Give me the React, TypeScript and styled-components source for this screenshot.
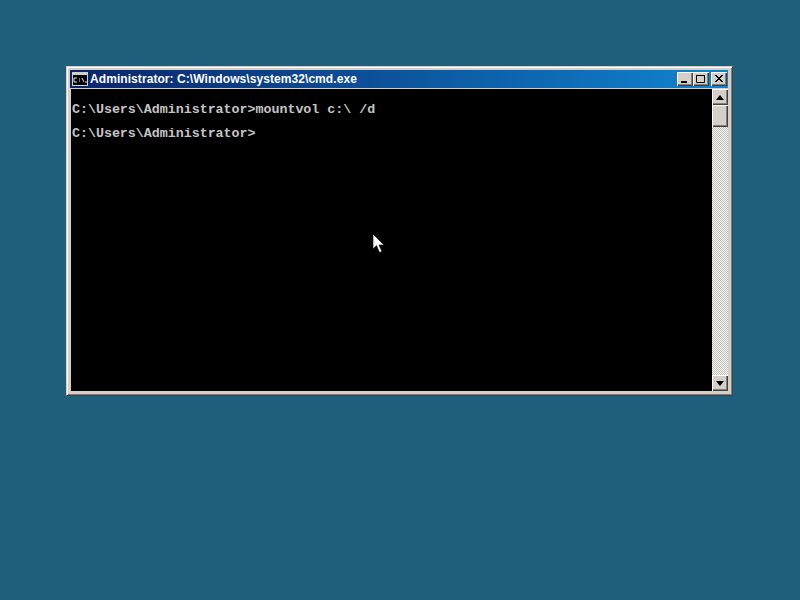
import React from "react";
import styled, { createGlobalStyle } from "styled-components";

const Global = createGlobalStyle`
  html, body { margin: 0; padding: 0; background: #1f5f7c; }
`;

const Desktop = styled.div`
  position: relative;
  width: 800px;
  height: 600px;
  background: #1f5f7c;
  padding: 66px 0 0 66px;
  box-sizing: border-box;
  overflow: hidden;
`;

const Window = styled.div`
  width: 667px;
  height: 330px;
  box-sizing: border-box;
  display: flex;
  flex-direction: column;
  background: #d4d0c8;
  border: 1px solid;
  border-color: #d4d0c8 #404040 #404040 #d4d0c8;
  box-shadow: inset 1px 1px 0 #fff, inset -1px -1px 0 #808080;
  padding: 3px 4px 4px 3px;
`;

const TitleBar = styled.div`
  height: 18px;
  flex: none;
  display: flex;
  align-items: center;
  gap: 2px;
  padding: 0 1px 0 2px;
  margin-bottom: 1px;
  background: linear-gradient(90deg, #0a246a 0%, #1084d0 100%);
`;

const TitleText = styled.span`
  flex: 1;
  color: #fff;
  font: bold 12px "Liberation Sans", sans-serif;
  letter-spacing: 0.07px;
  white-space: nowrap;
`;

const CaptionGroup = styled.div`
  display: flex;
`;

const CaptionButton = styled.div<{ $gap?: number }>`
  width: 16px;
  height: 14px;
  margin-left: ${(p) => p.$gap ?? 0}px;
  background: #d4d0c8;
  box-sizing: border-box;
  box-shadow: inset 1px 1px 0 #fff, inset -1px -1px 0 #404040, inset -2px -2px 0 #808080;
  display: flex;
  align-items: center;
  justify-content: center;
`;

const Body = styled.div`
  flex: 1;
  min-height: 0;
  display: flex;
  margin-left: 1px;
`;

const Console = styled.pre`
  flex: 1;
  margin: 0;
  padding: 15px 0 0 1px;
  background: #000;
  color: #c4c4c4;
  font: bold 13.33px/12px "Liberation Mono", monospace;
  letter-spacing: -0.02px;
  overflow: hidden;
`;

const ScrollBar = styled.div`
  width: 16px;
  flex: none;
  display: flex;
  flex-direction: column;
  background-image: repeating-conic-gradient(#bdbab3 0 25%, #fff 0 50%);
  background-size: 2px 2px;
`;

const ScrollButton = styled.div`
  width: 16px;
  height: 16px;
  flex: none;
  background: #d4d0c8;
  box-sizing: border-box;
  box-shadow: inset 1px 1px 0 #fff, inset -1px -1px 0 #404040, inset -2px -2px 0 #808080;
  display: flex;
  align-items: center;
  justify-content: center;
`;

const Thumb = styled(ScrollButton)`
  height: 22px;
`;

const Track = styled.div`
  flex: 1;
`;

const Pointer = styled.svg`
  position: absolute;
  left: 372px;
  top: 233px;
`;

const CmdIcon = () => (
  <svg width="16" height="14" viewBox="0 0 16 14" style={{ flex: "none" }}>
    <rect x="0" y="0" width="16" height="14" fill="#d4d0c8" />
    <rect x="1" y="3" width="14" height="10" fill="#000" />
    <path d="M2 6h3M2 10h3M2 6v4M7 7h1M7 9h1M10 6l2 4M13 10h2" stroke="#e0e0e0" strokeWidth="1" fill="none" />
  </svg>
);

export default function App() {
  return (
    <>
      <Global />
      <Desktop>
        <Window>
          <TitleBar>
            <CmdIcon />
            <TitleText>Administrator: C:\Windows\system32\cmd.exe</TitleText>
            <CaptionGroup>
              <CaptionButton>
                <svg width="10" height="10"><rect x="1" y="7" width="6" height="2" fill="#000" /></svg>
              </CaptionButton>
              <CaptionButton>
                <svg width="10" height="10"><path d="M0.5 1.5h8v7h-8z M0 1.5h9" stroke="#000" fill="none" /></svg>
              </CaptionButton>
              <CaptionButton $gap={2}>
                <svg width="10" height="10"><path d="M1 1l7 7M2 1l7 7M8 1l-7 7M9 1l-7 7" stroke="#000" fill="none" /></svg>
              </CaptionButton>
            </CaptionGroup>
          </TitleBar>
          <Body>
            <Console>{`C:\\Users\\Administrator>mountvol c:\\ /d\n\nC:\\Users\\Administrator>`}</Console>
            <ScrollBar>
              <ScrollButton>
                <svg width="8" height="5"><path d="M4 0l4 5H0z" fill="#000" /></svg>
              </ScrollButton>
              <Thumb />
              <Track />
              <ScrollButton>
                <svg width="8" height="5"><path d="M0 0h8L4 5z" fill="#000" /></svg>
              </ScrollButton>
            </ScrollBar>
          </Body>
        </Window>
        <Pointer width="13" height="21" viewBox="0 0 13 21">
          <path d="M1 1v15l3.5-3.5 3 7 2.5-1-3-6.5h5z" fill="#fff" stroke="#000" strokeWidth="0.6" />
        </Pointer>
      </Desktop>
    </>
  );
}
